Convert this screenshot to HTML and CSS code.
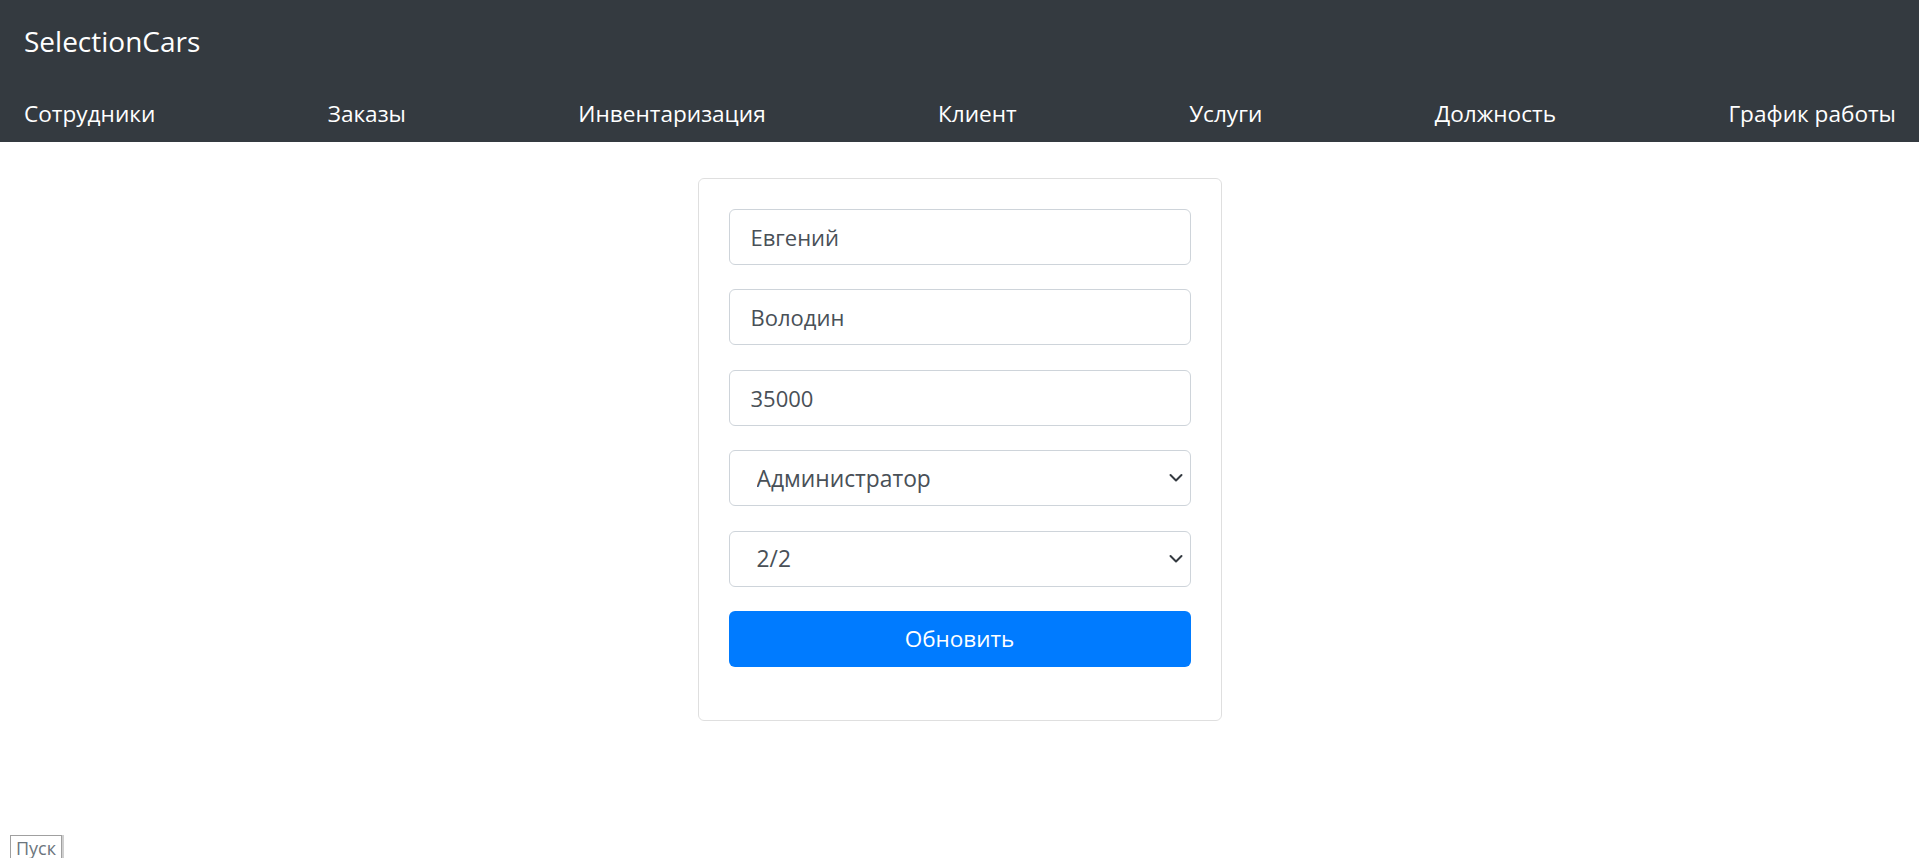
FILE: index.html
```html
<!DOCTYPE html>
<html>
<head>
  <title>SelectionCars</title>
  <meta charset="UTF-8">
  <link rel="stylesheet" href="styles.css">
</head>
<body>
  <header class="navbar">
    <div class="brand">SelectionCars</div>
    <nav class="nav-links">
      <a href="#">Сотрудники</a>
      <a href="#">Заказы</a>
      <a href="#">Инвентаризация</a>
      <a href="#">Клиент</a>
      <a href="#">Услуги</a>
      <a href="#">Должность</a>
      <a href="#">График работы</a>
    </nav>
  </header>

  <main class="page">
    <form class="card">
      <input type="text" class="form-control" value="Евгений">
      <input type="text" class="form-control" value="Володин">
      <input type="text" class="form-control" value="35000">

      <div class="select-wrap">
        <select class="form-select">
          <option>Администратор</option>
        </select>
        <svg class="chevron" width="14" height="10" viewBox="0 0 14 10">
          <path d="M1.5 2 L7 7.5 L12.5 2" fill="none" stroke="#343a40" stroke-width="2" stroke-linecap="round" stroke-linejoin="round"/>
        </svg>
      </div>

      <div class="select-wrap">
        <select class="form-select">
          <option>2/2</option>
        </select>
        <svg class="chevron" width="14" height="10" viewBox="0 0 14 10">
          <path d="M1.5 2 L7 7.5 L12.5 2" fill="none" stroke="#343a40" stroke-width="2" stroke-linecap="round" stroke-linejoin="round"/>
        </svg>
      </div>

      <button type="button" class="btn-primary">Обновить</button>
    </form>
  </main>

  <button type="button" class="start">Пуск</button>
</body>
</html>
```

FILE: styles.css
```css
:root {
  --dark: #343a40;
  --primary: #007bff;
  --input-border: #ced4da;
  --input-text: #495057;
}

body {
  margin: 0;
  font-family: "Open Sans", "Noto Sans", sans-serif;
  background-color: #fff;
  color: #212529;
}

.navbar {
  display: flex;
  flex-direction: column;
  background-color: var(--dark);
  padding: 20px 23px 12px 24px;
  height: 142px;
  box-sizing: border-box;
}

.brand {
  color: #fff;
  font-size: 28px;
  line-height: 42px;
}

.nav-links {
  display: flex;
  justify-content: space-between;
  margin-top: 35px;
}

.nav-links a {
  color: #fff;
  text-decoration: none;
  font-size: 22.6px;
  line-height: 33px;
}

.page {
  display: flex;
  justify-content: center;
  margin-top: 36px;
}

.card {
  display: flex;
  flex-direction: column;
  gap: 24.4px;
  width: 524px;
  box-sizing: border-box;
  padding: 30px 30px 53px;
  border: 1px solid rgba(0, 0, 0, 0.125);
  border-radius: 6px;
  margin: 0;
}

.form-control,
.form-select {
  display: block;
  width: 100%;
  height: 56px;
  box-sizing: border-box;
  border: 1px solid var(--input-border);
  border-radius: 6px;
  background-color: #fff;
  color: var(--input-text);
  font-family: inherit;
  margin: 0;
}

.form-control {
  padding: 0 21px;
  font-size: 22px;
}

.select-wrap {
  position: relative;
}

.form-select {
  appearance: none;
  -webkit-appearance: none;
  padding: 0 40px 0 27px;
  font-size: 22.8px;
}

.chevron {
  position: absolute;
  right: 8px;
  top: 23px;
  pointer-events: none;
}

.btn-primary {
  height: 56px;
  border: none;
  border-radius: 6px;
  background-color: var(--primary);
  color: #fff;
  font-family: inherit;
  font-size: 22.5px;
  cursor: pointer;
}

.start {
  display: block;
  margin: 114px 0 0 10px;
  padding: 1px 5px 2px;
  line-height: 22px;
  background-color: #fff;
  border: 1px solid #a0a0a0;
  box-shadow: 2px 0 0 #cfcfcf;
  color: #6c757d;
  font-family: inherit;
  font-size: 18px;
}
```
